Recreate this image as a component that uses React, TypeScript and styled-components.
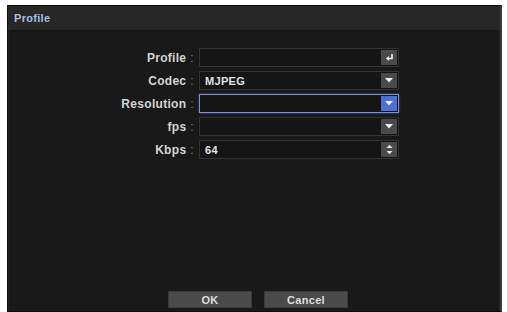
import React from 'react';
import styled, { createGlobalStyle } from 'styled-components';

const GlobalStyle = createGlobalStyle`
  html, body {
    margin: 0;
    padding: 0;
    background: #ffffff;
    overflow: hidden;
  }
  body {
    font-family: "Liberation Sans", Arial, sans-serif;
  }
`;

const Window = styled.div`
  margin: 5px 0 0 7px;
  width: 495px;
  height: 307px;
  display: flex;
  flex-direction: column;
  background: #1e1e1e;
  border: 1px solid #0e0e0e;
  border-right: 2px solid #3a3a3a;
  box-sizing: border-box;
`;

const TitleBar = styled.div`
  height: 24px;
  flex: none;
  display: flex;
  align-items: center;
  padding-left: 6px;
  background: #272727;
  color: #a9bfe0;
  font-size: 11px;
  font-weight: bold;
  letter-spacing: 0.3px;
`;

const Body = styled.div`
  flex: 1;
  margin: 0 2px 0 2px;
  display: flex;
  flex-direction: column;
  background: #191919;
  border: 1px solid #151515;
  border-bottom: none;
  padding: 17px 0 3px 0;
`;

const Form = styled.div`
  display: grid;
  grid-template-columns: 183px 200px;
  column-gap: 5px;
  row-gap: 4px;
  align-items: center;
`;

const Label = styled.div`
  text-align: right;
  color: #d4d4d4;
  font-size: 12px;
  font-weight: bold;
  letter-spacing: 0.3px;
  white-space: nowrap;
`;

const Colon = styled.span`
  color: #7a7a7a;
  font-weight: normal;
  margin-left: 4px;
`;

const Field = styled.div<{ $active?: boolean }>`
  height: 19px;
  box-sizing: border-box;
  display: flex;
  align-items: center;
  justify-content: space-between;
  background: #151515;
  border: 1px solid ${({ $active }) => ($active ? '#7d8fd0' : '#333333')};
  box-shadow: ${({ $active }) => ($active ? '0 0 2px #4a5fa8' : 'none')};
  padding: 0 1px 0 5px;
  color: #e2e2e2;
  font-size: 11px;
  font-weight: bold;
  letter-spacing: 0.3px;
`;

const FieldButton = styled.div<{ $active?: boolean }>`
  width: 16px;
  height: 15px;
  display: flex;
  align-items: center;
  justify-content: center;
  background: ${({ $active }) => ($active ? '#4d6fd8' : '#4a4a4a')};
`;

const Actions = styled.div`
  margin-top: auto;
  display: flex;
  justify-content: center;
  gap: 12px;
  padding-left: 8px;
`;

const Button = styled.button`
  width: 84px;
  height: 17px;
  padding: 0;
  border: 1px solid #3a3a3a;
  background: #4a4a4a;
  color: #dedede;
  font-family: "Liberation Sans", Arial, sans-serif;
  font-size: 11px;
  font-weight: bold;
  letter-spacing: 0.3px;
`;

const EnterIcon = () => (
  <svg width="9" height="9" viewBox="0 0 9 9">
    <path d="M7 1 V5.5 H3" stroke="#f2f2f2" strokeWidth="1.6" fill="none" />
    <path d="M1 5.5 L3.8 3 V8 Z" fill="#f2f2f2" />
  </svg>
);

const DownIcon = () => (
  <svg width="8" height="5" viewBox="0 0 8 5">
    <path d="M0 0 H8 L4 4.5 Z" fill="#f0f0f0" />
  </svg>
);

const SpinIcon = () => (
  <svg width="7" height="11" viewBox="0 0 7 11">
    <path d="M0.5 4 L3.5 0.8 L6.5 4 Z" fill="#e8e8e8" />
    <path d="M0.5 7 L3.5 10.2 L6.5 7 Z" fill="#e8e8e8" />
  </svg>
);

type Row = {
  label: string;
  value: string;
  icon: 'enter' | 'down' | 'spin';
  active?: boolean;
};

const rows: Row[] = [
  { label: 'Profile', value: '', icon: 'enter' },
  { label: 'Codec', value: 'MJPEG', icon: 'down' },
  { label: 'Resolution', value: '', icon: 'down', active: true },
  { label: 'fps', value: '', icon: 'down' },
  { label: 'Kbps', value: '64', icon: 'spin' },
];

export default function App() {
  return (
    <>
      <GlobalStyle />
      <Window>
        <TitleBar>Profile</TitleBar>
        <Body>
          <Form>
            {rows.map((row) => (
              <React.Fragment key={row.label}>
                <Label>
                  {row.label}
                  <Colon>:</Colon>
                </Label>
                <Field $active={row.active}>
                  <span>{row.value}</span>
                  <FieldButton $active={row.active}>
                    {row.icon === 'enter' && <EnterIcon />}
                    {row.icon === 'down' && <DownIcon />}
                    {row.icon === 'spin' && <SpinIcon />}
                  </FieldButton>
                </Field>
              </React.Fragment>
            ))}
          </Form>
          <Actions>
            <Button>OK</Button>
            <Button>Cancel</Button>
          </Actions>
        </Body>
      </Window>
    </>
  );
}
